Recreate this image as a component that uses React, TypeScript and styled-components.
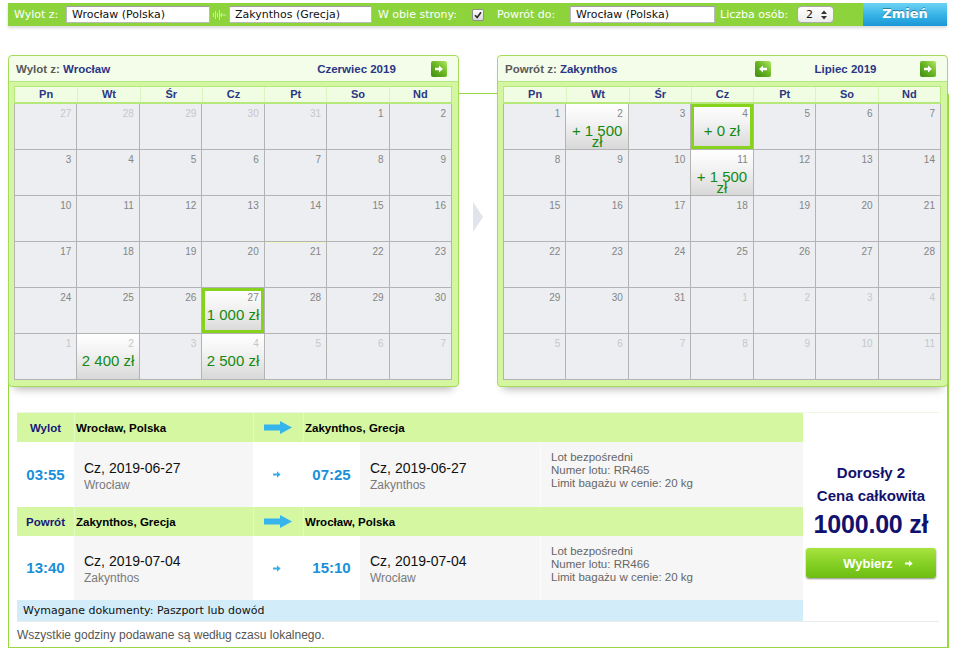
import React from 'react';
import styled, { createGlobalStyle, css } from 'styled-components';

const GlobalStyle = createGlobalStyle`
  html, body { margin: 0; padding: 0; background: #fff; }
  body { font-family: "Liberation Sans", Arial, sans-serif; color: #000; }
  * { box-sizing: border-box; }
`;

const Page = styled.div`
  width: 955px;
  padding: 3px 7px 0 8px;
`;

/* ---------- search bar ---------- */
const SearchBar = styled.div`
  display: flex;
  align-items: center;
  width: 939px;
  height: 23px;
  padding-left: 6px;
  background: #8dd43c;
  box-shadow: 0 2px 3px rgba(0, 0, 0, 0.15);
  font-family: "DejaVu Sans", Verdana, sans-serif;
  font-size: 11px;
`;

const BarLabel = styled.span<{ $w: number; $ml?: number }>`
  width: ${p => p.$w}px;
  margin-left: ${p => p.$ml ?? 0}px;
  color: #fff;
  white-space: nowrap;
`;

const BarInput = styled.div<{ $w: number }>`
  width: ${p => p.$w}px;
  height: 17px;
  padding: 0 5px;
  background: #fff;
  border: 1px solid #b9b9b9;
  border-top-color: #9d9d9d;
  color: #111;
  line-height: 15px;
  white-space: nowrap;
`;

const SwapIcon = styled.span`
  width: 19px;
  display: flex;
  justify-content: center;
`;

const CheckBox = styled.span`
  width: 12px;
  height: 12px;
  margin-left: 1px;
  margin-right: 13px;
  border: 1px solid #8e8e8e;
  border-radius: 2px;
  background: linear-gradient(#fdfdfd, #d9d9d9);
  display: flex;
  align-items: center;
  justify-content: center;
`;

const SelectBox = styled.div`
  width: 37px;
  height: 17px;
  border: 1px solid #a9a9a9;
  border-radius: 4px;
  background: linear-gradient(#ffffff, #ececec);
  display: flex;
  align-items: center;
  justify-content: space-between;
  padding: 0 6px 0 8px;
  color: #111;
`;

const ChangeButton = styled.button`
  margin-left: auto;
  width: 84px;
  height: 23px;
  border: 0;
  border-radius: 0;
  background: linear-gradient(#6dd2f4, #35b2e6 55%, #1b97d6);
  color: #fff;
  font-family: "DejaVu Sans", Verdana, sans-serif;
  font-weight: bold;
  font-size: 13px;
  text-shadow: 0 -1px 0 rgba(0, 0, 0, 0.35);
  padding: 0 0 2px;
`;

/* ---------- result box ---------- */
const ResultBox = styled.div`
  margin-top: 67px;
  width: 940px;
  border: 1px solid #98d843;
  box-shadow: 1px 1px 0 #98d843;
  padding: 0 8px 5px 8px;
`;

const CalendarRow = styled.div`
  display: flex;
  justify-content: space-between;
  margin: -39px -9px 0 -9px;
`;

const Gap = styled.div`
  flex: 1;
  display: flex;
  align-items: center;
  justify-content: center;
  padding-bottom: 8px;
`;

const Panel = styled.section`
  width: 451px;
  background: #d4f6a0;
  border: 1px solid #a4dc57;
  border-radius: 4px;
  box-shadow: 0 8px 8px -6px rgba(0, 0, 0, 0.3);
`;

const PanelHead = styled.div`
  height: 26px;
  display: flex;
  align-items: center;
  padding: 0 11px 0 7px;
  background: #f3fde9;
  border-bottom: 1px solid #b5e783;
  border-radius: 4px 4px 0 0;
  font-size: 11.5px;
  font-weight: bold;
`;

const HeadTitle = styled.div`
  flex: 1;
  color: #5a5a5a;
  white-space: nowrap;
`;

const Navy = styled.span`
  color: #2b3585;
`;

const MonthNav = styled.div`
  width: 181px;
  display: flex;
  align-items: center;
`;

const MonthLabel = styled.div`
  flex: 1;
  text-align: center;
  color: #2b3585;
  padding-top: 1px;
`;

const NavBtn = styled.span<{ $hidden?: boolean }>`
  width: 16px;
  height: 16px;
  border-radius: 2px;
  background: linear-gradient(225deg, #b3e866 0%, #6cb825 45%, #3f8b10 100%);
  display: flex;
  align-items: center;
  justify-content: center;
  visibility: ${p => (p.$hidden ? 'hidden' : 'visible')};
`;

const PanelBody = styled.div`
  padding: 4px 6px 6px 5px;
`;

const DayHeads = styled.div`
  display: grid;
  grid-template-columns: repeat(7, 1fr);
  height: 18px;
  background: #f0fde2;
  border: 1px solid #b6e97c;
  border-bottom-width: 2px;
`;

const DayHead = styled.div`
  text-align: center;
  color: #2b3585;
  font-weight: bold;
  font-size: 11px;
  line-height: 15px;
  border-left: 1px solid #d9f4bd;
  &:first-child { border-left: 0; }
`;

const Grid = styled.div`
  display: grid;
  grid-template-columns: repeat(7, 1fr);
  border-left: 1px solid #b3b3b3;
`;

const Cell = styled.div<{ $priced?: boolean; $selected?: boolean; $today?: boolean }>`
  height: 46px;
  border-right: 1px solid #b3b3b3;
  border-bottom: 1px solid #b3b3b3;
  background: #eceef1;
  ${p =>
    p.$priced &&
    css`
      background: linear-gradient(#ffffff, #f3f3f3 40%, #d8d8d8);
    `}
  ${p =>
    p.$selected &&
    css`
      box-shadow: inset 0 0 0 3px #86d21c;
    `}
  ${p =>
    p.$today &&
    css`
      box-shadow: inset 1px 1px 0 #f1f4c4;
    `}
`;

const DayNum = styled.div<{ $muted?: boolean }>`
  text-align: right;
  font-size: 10px;
  line-height: 11px;
  padding: 4px 5px 0 0;
  color: ${p => (p.$muted ? '#c6c7c9' : '#858585')};
`;

const Price = styled.div`
  margin-top: 6px;
  text-align: center;
  font-size: 15px;
  line-height: 11px;
  color: #148a14;
  padding: 0 2px;
`;

/* ---------- flight table ---------- */
const FlightTable = styled.div`
  display: flex;
  margin-top: 25px;
  border-top: 1px solid #eef8e2;
  border-bottom: 1px solid #ebebeb;
`;

const Legs = styled.div`
  width: 786px;
`;

const LegGrid = styled.div<{ $h: number; $head?: boolean }>`
  display: grid;
  grid-template-columns: 57px 179px 50px 57px 180px 1fr;
  height: ${p => p.$h}px;
  ${p =>
    p.$head &&
    css`
      background: #d6f7a1;
    `}
`;

const HeadLabel = styled.div`
  display: flex;
  align-items: center;
  justify-content: center;
  color: #17177a;
  font-weight: bold;
  font-size: 11.5px;
`;

const HeadCity = styled.div<{ $span?: number }>`
  display: flex;
  align-items: center;
  padding-left: 1px;
  font-weight: bold;
  font-size: 11.5px;
  grid-column: span ${p => p.$span ?? 1};
  border-left: 1px solid rgba(255, 255, 255, 0.35);
`;

const ArrowCell = styled.div<{ $head?: boolean }>`
  display: flex;
  align-items: center;
  justify-content: center;
  padding-right: ${p => (p.$head ? 2 : 3)}px;
  background: ${p => (p.$head ? 'transparent' : '#fff')};
  border-left: ${p => (p.$head ? '1px solid rgba(255,255,255,0.35)' : '0')};
`;

const TimeCell = styled.div`
  display: flex;
  align-items: center;
  justify-content: center;
  background: #fff;
  color: #1a8fd9;
  font-weight: bold;
  font-size: 15px;
  padding-bottom: 1px;
`;

const DateCell = styled.div`
  display: flex;
  flex-direction: column;
  justify-content: center;
  padding: 3px 0 0 10px;
  background: #f6f6f6;
`;

const DateLine = styled.div`
  font-size: 14px;
  line-height: 17px;
  color: #111;
`;

const CityLine = styled.div`
  font-size: 12px;
  line-height: 16px;
  color: #7a7a7a;
`;

const InfoCell = styled.div`
  padding: 9px 0 0 10px;
  background: #f6f6f6;
  border-left: 1px solid #fbfbfb;
  font-size: 11.5px;
  line-height: 13px;
  color: #666;
`;

const Docs = styled.div`
  height: 21px;
  padding-left: 6px;
  background: #d2ecf9;
  font-family: "DejaVu Sans", Verdana, sans-serif;
  font-size: 11px;
  line-height: 22px;
  color: #111;
`;

const PriceBox = styled.div`
  flex: 1;
  display: flex;
  flex-direction: column;
  align-items: center;
  justify-content: center;
  padding-top: 5px;
  color: #12126e;
  font-weight: bold;
`;

const PriceLine = styled.div`
  font-size: 15px;
  line-height: 23px;
`;

const BigPrice = styled.div`
  margin-top: 2px;
  font-size: 25px;
  line-height: 30px;
  letter-spacing: -0.2px;
`;

const ChooseButton = styled.button`
  margin-top: 9px;
  width: 130px;
  height: 30px;
  border: 0;
  border-radius: 3px;
  background: linear-gradient(#a9e340, #86d125 50%, #6dbd12);
  box-shadow: 0 1px 2px rgba(0, 0, 0, 0.45);
  color: #fff;
  font-family: "Liberation Sans", Arial, sans-serif;
  font-weight: bold;
  font-size: 13px;
  display: flex;
  align-items: center;
  justify-content: center;
  gap: 12px;
  padding: 0 0 0 14px;
`;

const Note = styled.div`
  margin-top: 6px;
  font-size: 12px;
  line-height: 14px;
  color: #555;
`;

/* ---------- data ---------- */
type Day = { n: number; muted?: boolean; price?: string; selected?: boolean; today?: boolean };

const range = (a: number, b: number, muted = false): Day[] =>
  Array.from({ length: b - a + 1 }, (_, i) => ({ n: a + i, muted }));

const june: Day[] = [...range(27, 31, true), ...range(1, 30), ...range(1, 7, true)];
june[31] = { ...june[31], price: '1 000 zł', selected: true };
june[36] = { ...june[36], price: '2 400 zł' };
june[38] = { ...june[38], price: '2 500 zł' };
june[25] = { ...june[25], today: true };

const july: Day[] = [...range(1, 31), ...range(1, 11, true)];
july[1] = { ...july[1], price: '+ 1 500 zł' };
july[3] = { ...july[3], price: '+ 0 zł', selected: true };
july[10] = { ...july[10], price: '+ 1 500 zł' };

const weekDays = ['Pn', 'Wt', 'Śr', 'Cz', 'Pt', 'So', 'Nd'];

/* ---------- icons ---------- */
const NavArrow = ({ left }: { left?: boolean }) => (
  <svg width="10" height="8" viewBox="0 0 10 8" style={left ? { transform: 'scaleX(-1)' } : undefined}>
    <polygon points="1,2.8 5,2.8 5,0.5 9,4 5,7.5 5,5.2 1,5.2" fill="#fff" />
  </svg>
);

const BigArrow = () => (
  <svg width="28" height="13" viewBox="0 0 28 13">
    <polygon points="0,3.5 16,3.5 16,0 28,6.5 16,13 16,9.5 0,9.5" fill="#36b4ec" />
  </svg>
);

const SmallArrow = ({ color = '#36aee8' }: { color?: string }) => (
  <svg width="8" height="7" viewBox="0 0 8 7">
    <polygon points="0,2.6 4,2.6 4,0.3 7.6,3.5 4,6.7 4,4.4 0,4.4" fill={color} />
  </svg>
);

/* ---------- components ---------- */
const Calendar = ({
  label,
  city,
  month,
  days,
  prev,
}: {
  label: string;
  city: string;
  month: string;
  days: Day[];
  prev?: boolean;
}) => (
  <Panel>
    <PanelHead>
      <HeadTitle>
        {label} <Navy>{city}</Navy>
      </HeadTitle>
      <MonthNav>
        <NavBtn $hidden={!prev}>
          <NavArrow left />
        </NavBtn>
        <MonthLabel>{month}</MonthLabel>
        <NavBtn>
          <NavArrow />
        </NavBtn>
      </MonthNav>
    </PanelHead>
    <PanelBody>
      <DayHeads>
        {weekDays.map(d => (
          <DayHead key={d}>{d}</DayHead>
        ))}
      </DayHeads>
      <Grid>
        {days.map((d, i) => (
          <Cell key={i} $priced={!!d.price} $selected={d.selected} $today={d.today}>
            <DayNum $muted={d.muted}>{d.n}</DayNum>
            {d.price && <Price>{d.price}</Price>}
          </Cell>
        ))}
      </Grid>
    </PanelBody>
  </Panel>
);

type Leg = {
  label: string;
  from: string;
  to: string;
  dep: string;
  arr: string;
  date: string;
  depCity: string;
  arrCity: string;
  number: string;
  h: number;
};

const legs: Leg[] = [
  {
    label: 'Wylot',
    from: 'Wrocław, Polska',
    to: 'Zakynthos, Grecja',
    dep: '03:55',
    arr: '07:25',
    date: '2019-06-27',
    depCity: 'Wrocław',
    arrCity: 'Zakynthos',
    number: 'RR465',
    h: 65,
  },
  {
    label: 'Powrót',
    from: 'Zakynthos, Grecja',
    to: 'Wrocław, Polska',
    dep: '13:40',
    arr: '15:10',
    date: '2019-07-04',
    depCity: 'Zakynthos',
    arrCity: 'Wrocław',
    number: 'RR466',
    h: 64,
  },
];

export default function App() {
  return (
    <Page>
      <GlobalStyle />
      <SearchBar>
        <BarLabel $w={52}>Wylot z:</BarLabel>
        <BarInput $w={144}>Wrocław (Polska)</BarInput>
        <SwapIcon>
          <svg width="13" height="10" viewBox="0 0 13 10">
            <g fill="#c9efa0">
              <rect x="0" y="3" width="1" height="4" />
              <rect x="2" y="1" width="1" height="8" />
              <rect x="4" y="3" width="1" height="4" />
              <rect x="6" y="0" width="1" height="10" />
              <rect x="8" y="3" width="1" height="4" />
              <rect x="7" y="4.5" width="6" height="1" />
            </g>
          </svg>
        </SwapIcon>
        <BarInput $w={143}>Zakynthos (Grecja)</BarInput>
        <BarLabel $w={93} $ml={6}>
          W obie strony:
        </BarLabel>
        <CheckBox>
          <svg width="8" height="8" viewBox="0 0 8 8">
            <path d="M1 4.2 L3.2 6.4 L7 1.2" stroke="#2a2a2a" strokeWidth="1.6" fill="none" />
          </svg>
        </CheckBox>
        <BarLabel $w={73}>Powrót do:</BarLabel>
        <BarInput $w={145}>Wrocław (Polska)</BarInput>
        <BarLabel $w={77} $ml={5}>
          Liczba osób:
        </BarLabel>
        <SelectBox>
          <span>2</span>
          <svg width="6" height="10" viewBox="0 0 6 10">
            <polygon points="3,0.5 6,4 0,4" fill="#333" />
            <polygon points="0,6 6,6 3,9.5" fill="#333" />
          </svg>
        </SelectBox>
        <ChangeButton>Zmień</ChangeButton>
      </SearchBar>

      <ResultBox>
        <CalendarRow>
          <Calendar label="Wylot z:" city="Wrocław" month="Czerwiec 2019" days={june} />
          <Gap>
            <svg width="10" height="30" viewBox="0 0 10 30">
              <polygon points="0,0 10,15 0,30" fill="#dfe5eb" />
            </svg>
          </Gap>
          <Calendar label="Powrót z:" city="Zakynthos" month="Lipiec 2019" days={july} prev />
        </CalendarRow>

        <FlightTable>
          <Legs>
            {legs.map(l => (
              <React.Fragment key={l.label}>
                <LegGrid $h={29} $head>
                  <HeadLabel>{l.label}</HeadLabel>
                  <HeadCity>{l.from}</HeadCity>
                  <ArrowCell $head>
                    <BigArrow />
                  </ArrowCell>
                  <HeadCity $span={3}>{l.to}</HeadCity>
                </LegGrid>
                <LegGrid $h={l.h}>
                  <TimeCell>{l.dep}</TimeCell>
                  <DateCell>
                    <DateLine>Cz, {l.date}</DateLine>
                    <CityLine>{l.depCity}</CityLine>
                  </DateCell>
                  <ArrowCell>
                    <SmallArrow />
                  </ArrowCell>
                  <TimeCell>{l.arr}</TimeCell>
                  <DateCell>
                    <DateLine>Cz, {l.date}</DateLine>
                    <CityLine>{l.arrCity}</CityLine>
                  </DateCell>
                  <InfoCell>
                    Lot bezpośredni
                    <br />
                    Numer lotu: {l.number}
                    <br />
                    Limit bagażu w cenie: 20 kg
                  </InfoCell>
                </LegGrid>
              </React.Fragment>
            ))}
            <Docs>Wymagane dokumenty: Paszport lub dowód</Docs>
          </Legs>
          <PriceBox>
            <PriceLine>Dorosły 2</PriceLine>
            <PriceLine>Cena całkowita</PriceLine>
            <BigPrice>1000.00 zł</BigPrice>
            <ChooseButton>
              Wybierz
              <SmallArrow color="#fff" />
            </ChooseButton>
          </PriceBox>
        </FlightTable>
        <Note>Wszystkie godziny podawane są według czasu lokalnego.</Note>
      </ResultBox>
    </Page>
  );
}
